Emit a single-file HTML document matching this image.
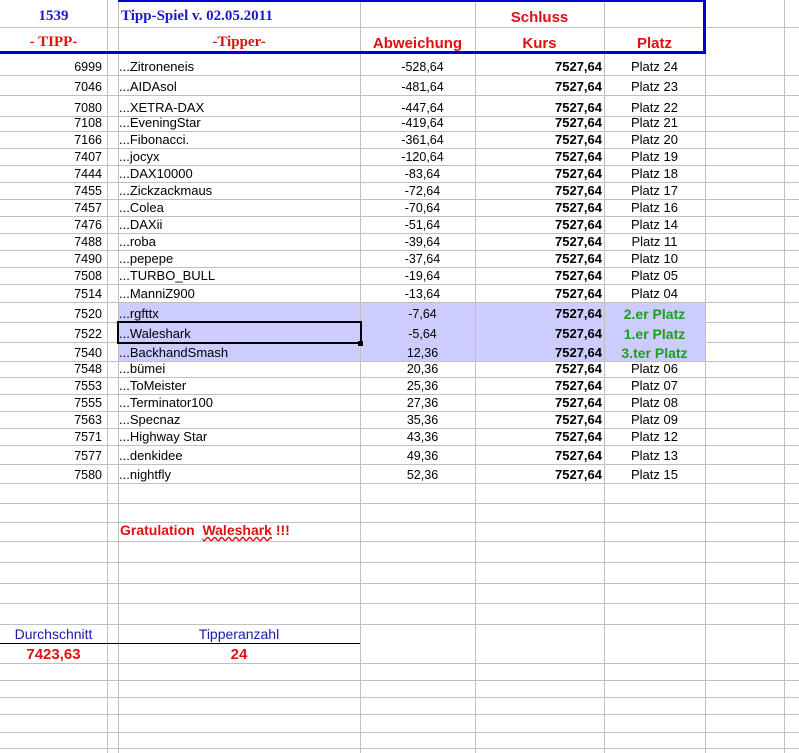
<!DOCTYPE html>
<html><head><meta charset="utf-8"><style>
*{margin:0;padding:0;box-sizing:border-box}
body{width:799px;height:753px;background:#fff;position:relative;overflow:hidden;font-family:"Liberation Sans",Arial,sans-serif;font-size:13px;color:#000}
.h{position:absolute;left:0;width:799px;height:1px;background:#c0c0c0}
.v{position:absolute;top:0;width:1px;height:753px;background:#c0c0c0}
.r{position:absolute;left:0;width:705px;display:flex;align-items:flex-end;padding-bottom:1px}
.r div{white-space:nowrap;line-height:14px}
.a{width:107px;text-align:right;padding-right:5px;font-size:12.5px}
.b{width:253px;padding-left:12px}
.c{width:115px;text-align:center;padding-left:10px;font-size:12.5px}
.d{width:129px;text-align:right;font-weight:bold;padding-right:2px}
.e{width:101px;text-align:center}
.g{color:#1aa01a;font-weight:bold;font-size:14px}
.t{position:absolute;white-space:nowrap}
</style></head><body>
<div class="h" style="top:27px"></div>
<div class="h" style="top:75px"></div><div class="h" style="top:95px"></div><div class="h" style="top:116px"></div><div class="h" style="top:131px"></div><div class="h" style="top:148px"></div><div class="h" style="top:165px"></div><div class="h" style="top:182px"></div><div class="h" style="top:199px"></div><div class="h" style="top:216px"></div><div class="h" style="top:233px"></div><div class="h" style="top:250px"></div><div class="h" style="top:267px"></div><div class="h" style="top:284px"></div><div class="h" style="top:302px"></div><div class="h" style="top:322px"></div><div class="h" style="top:342px"></div><div class="h" style="top:361px"></div><div class="h" style="top:377px"></div><div class="h" style="top:394px"></div><div class="h" style="top:411px"></div><div class="h" style="top:428px"></div><div class="h" style="top:445px"></div><div class="h" style="top:464px"></div><div class="h" style="top:483px"></div><div class="h" style="top:503px"></div><div class="h" style="top:522px"></div><div class="h" style="top:541px"></div><div class="h" style="top:562px"></div><div class="h" style="top:583px"></div><div class="h" style="top:603px"></div><div class="h" style="top:624px"></div><div class="h" style="top:663px"></div><div class="h" style="top:680px"></div><div class="h" style="top:697px"></div><div class="h" style="top:714px"></div><div class="h" style="top:732px"></div><div class="h" style="top:748px"></div>
<div style="position:absolute;left:118px;top:303px;width:587px;height:58px;background:#ccccff"></div>
<div class="v" style="left:107px"></div><div class="v" style="left:118px"></div><div class="v" style="left:360px"></div><div class="v" style="left:475px"></div><div class="v" style="left:604px"></div><div class="v" style="left:705px"></div><div class="v" style="left:784px"></div>
<div style="position:absolute;left:118px;top:0;width:588px;height:54px;border:3px solid #0000cc;border-left:none;border-top:2px solid #0000cc"></div>
<div style="position:absolute;left:0;top:51px;width:118px;height:3px;background:#0000cc"></div>
<div class="t" style="left:0;width:107px;text-align:center;top:8px;font-family:'Liberation Serif',serif;font-weight:bold;color:#1a1acc;font-size:15px">1539</div>
<div class="t" style="left:121px;top:8px;font-family:'Liberation Serif',serif;font-weight:bold;color:#1a1acc;font-size:15px">Tipp-Spiel v. 02.05.2011</div>
<div class="t" style="left:0;width:107px;text-align:center;top:34px;font-family:'Liberation Serif',serif;font-weight:bold;color:#e01010;font-size:15px">- TIPP-</div>
<div class="t" style="left:118px;width:242px;text-align:center;top:34px;font-family:'Liberation Serif',serif;font-weight:bold;color:#e01010;font-size:15px">-Tipper-</div>
<div class="t" style="left:360px;width:115px;text-align:center;top:35px;font-weight:bold;color:#e01010;font-size:15px">Abweichung</div>
<div class="t" style="left:475px;width:129px;text-align:center;top:9px;font-weight:bold;color:#e01010;font-size:15px">Schluss</div>
<div class="t" style="left:475px;width:129px;text-align:center;top:35px;font-weight:bold;color:#e01010;font-size:15px">Kurs</div>
<div class="t" style="left:604px;width:101px;text-align:center;top:35px;font-weight:bold;color:#e01010;font-size:15px">Platz</div>
<div class="r" style="top:54px;height:21px"><div class="a">6999</div><div class="b">...Zitroneneis</div><div class="c">-528,64</div><div class="d">7527,64</div><div class="e">Platz 24</div></div>
<div class="r" style="top:75px;height:20px"><div class="a">7046</div><div class="b">...AIDAsol</div><div class="c">-481,64</div><div class="d">7527,64</div><div class="e">Platz 23</div></div>
<div class="r" style="top:95px;height:21px"><div class="a">7080</div><div class="b">...XETRA-DAX</div><div class="c">-447,64</div><div class="d">7527,64</div><div class="e">Platz 22</div></div>
<div class="r" style="top:116px;height:15px"><div class="a">7108</div><div class="b">...EveningStar</div><div class="c">-419,64</div><div class="d">7527,64</div><div class="e">Platz 21</div></div>
<div class="r" style="top:131px;height:17px"><div class="a">7166</div><div class="b">...Fibonacci.</div><div class="c">-361,64</div><div class="d">7527,64</div><div class="e">Platz 20</div></div>
<div class="r" style="top:148px;height:17px"><div class="a">7407</div><div class="b">...jocyx</div><div class="c">-120,64</div><div class="d">7527,64</div><div class="e">Platz 19</div></div>
<div class="r" style="top:165px;height:17px"><div class="a">7444</div><div class="b">...DAX10000</div><div class="c">-83,64</div><div class="d">7527,64</div><div class="e">Platz 18</div></div>
<div class="r" style="top:182px;height:17px"><div class="a">7455</div><div class="b">...Zickzackmaus</div><div class="c">-72,64</div><div class="d">7527,64</div><div class="e">Platz 17</div></div>
<div class="r" style="top:199px;height:17px"><div class="a">7457</div><div class="b">...Colea</div><div class="c">-70,64</div><div class="d">7527,64</div><div class="e">Platz 16</div></div>
<div class="r" style="top:216px;height:17px"><div class="a">7476</div><div class="b">...DAXii</div><div class="c">-51,64</div><div class="d">7527,64</div><div class="e">Platz 14</div></div>
<div class="r" style="top:233px;height:17px"><div class="a">7488</div><div class="b">...roba</div><div class="c">-39,64</div><div class="d">7527,64</div><div class="e">Platz 11</div></div>
<div class="r" style="top:250px;height:17px"><div class="a">7490</div><div class="b">...pepepe</div><div class="c">-37,64</div><div class="d">7527,64</div><div class="e">Platz 10</div></div>
<div class="r" style="top:267px;height:17px"><div class="a">7508</div><div class="b">...TURBO_BULL</div><div class="c">-19,64</div><div class="d">7527,64</div><div class="e">Platz 05</div></div>
<div class="r" style="top:284px;height:18px"><div class="a">7514</div><div class="b">...ManniZ900</div><div class="c">-13,64</div><div class="d">7527,64</div><div class="e">Platz 04</div></div>
<div class="r" style="top:302px;height:20px"><div class="a">7520</div><div class="b">...rgfttx</div><div class="c">-7,64</div><div class="d">7527,64</div><div class="e g">2.er Platz</div></div>
<div class="r" style="top:322px;height:20px"><div class="a">7522</div><div class="b">...Waleshark</div><div class="c">-5,64</div><div class="d">7527,64</div><div class="e g">1.er Platz</div></div>
<div class="r" style="top:342px;height:19px"><div class="a">7540</div><div class="b">...BackhandSmash</div><div class="c">12,36</div><div class="d">7527,64</div><div class="e g">3.ter Platz</div></div>
<div class="r" style="top:361px;height:16px"><div class="a">7548</div><div class="b">...bümei</div><div class="c">20,36</div><div class="d">7527,64</div><div class="e">Platz 06</div></div>
<div class="r" style="top:377px;height:17px"><div class="a">7553</div><div class="b">...ToMeister</div><div class="c">25,36</div><div class="d">7527,64</div><div class="e">Platz 07</div></div>
<div class="r" style="top:394px;height:17px"><div class="a">7555</div><div class="b">...Terminator100</div><div class="c">27,36</div><div class="d">7527,64</div><div class="e">Platz 08</div></div>
<div class="r" style="top:411px;height:17px"><div class="a">7563</div><div class="b">...Specnaz</div><div class="c">35,36</div><div class="d">7527,64</div><div class="e">Platz 09</div></div>
<div class="r" style="top:428px;height:17px"><div class="a">7571</div><div class="b">...Highway Star</div><div class="c">43,36</div><div class="d">7527,64</div><div class="e">Platz 12</div></div>
<div class="r" style="top:445px;height:19px"><div class="a">7577</div><div class="b">...denkidee</div><div class="c">49,36</div><div class="d">7527,64</div><div class="e">Platz 13</div></div>
<div class="r" style="top:464px;height:19px"><div class="a">7580</div><div class="b">...nightfly</div><div class="c">52,36</div><div class="d">7527,64</div><div class="e">Platz 15</div></div>
<div style="position:absolute;left:117px;top:321px;width:245px;height:23px;border:2px solid #000"></div>
<div style="position:absolute;left:358px;top:341px;width:5px;height:5px;background:#000"></div>
<div class="t" style="left:120px;top:522px;font-weight:bold;color:#e01010;font-size:14px">Gratulation&nbsp; <span style="text-decoration:underline wavy #e01010">Waleshark</span> !!!</div>
<div class="t" style="left:0;width:107px;text-align:center;top:626px;color:#1a1aaa;font-size:14px">Durchschnitt</div>
<div class="t" style="left:118px;width:242px;text-align:center;top:626px;color:#1a1aaa;font-size:14px">Tipperanzahl</div>
<div style="position:absolute;left:0;top:643px;width:360px;height:1px;background:#000"></div>
<div class="t" style="left:0;width:107px;text-align:center;top:646px;color:#e01010;font-weight:bold;font-size:15px">7423,63</div>
<div class="t" style="left:118px;width:242px;text-align:center;top:646px;color:#e01010;font-weight:bold;font-size:15px">24</div>
</body></html>
